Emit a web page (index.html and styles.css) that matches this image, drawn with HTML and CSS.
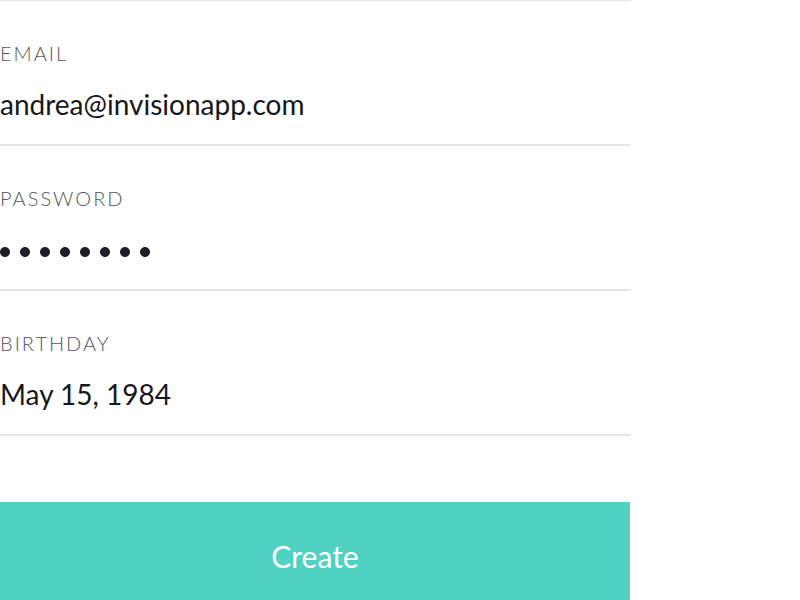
FILE: index.html
```html
<!DOCTYPE html>
<html lang="en">
<head>
<meta charset="utf-8">
<title>Create account</title>
<link rel="stylesheet" href="styles.css">
</head>
<body>
<form class="signup">
  <div class="fields">
    <div class="field">
      <label class="label" for="email">EMAIL</label>
      <input class="input" id="email" type="text" value="andrea@invisionapp.com">
    </div>
    <div class="field">
      <label class="label" for="password">PASSWORD</label>
      <div class="secret">
        <input class="input input-secret" id="password" type="password" value="password">
        <span class="dots" aria-hidden="true"></span>
      </div>
    </div>
    <div class="field">
      <label class="label" for="birthday">BIRTHDAY</label>
      <input class="input" id="birthday" type="text" value="May 15, 1984">
    </div>
  </div>
  <button class="create" type="button">Create</button>
</form>
</body>
</html>
```

FILE: styles.css
```css
* {
  box-sizing: border-box;
}

body {
  margin: 0;
  background: #fff;
  font-family: Lato, "Liberation Sans", sans-serif;
}

.signup {
  width: 78.75%;
}

.fields {
  margin-right: -1px;
  border-top: 1px solid #e6e6e6;
}

.field {
  display: flex;
  flex-direction: column;
  padding: 40px 0 20px;
  border-bottom: 2px solid #e6e6e6;
}

.label {
  color: #555559;
  font-size: 20px;
  font-weight: 300;
  line-height: 25px;
  letter-spacing: 2px;
}

.input {
  display: block;
  width: 100%;
  height: 40px;
  margin-top: 18px;
  padding: 0;
  border: 0;
  outline: 0;
  background: transparent;
  color: #17171b;
  font: inherit;
  font-size: 28px;
  line-height: 40px;
}

.secret {
  position: relative;
}

.input-secret {
  color: transparent;
}

/* Round bullets, one every 20px */
.dots {
  position: absolute;
  left: 0;
  bottom: 12px;
  width: 160px;
  height: 10px;
  background: radial-gradient(circle closest-side at 5px 5px, #1f1d28 90%, transparent 108%) 0 0 / 20px 10px;
  pointer-events: none;
}

.create {
  display: block;
  width: 100%;
  height: 108px;
  margin-top: 66px;
  padding: 0;
  border: 0;
  background: #50d2c2;
  color: #fff;
  font: inherit;
  font-size: 30px;
}
```
